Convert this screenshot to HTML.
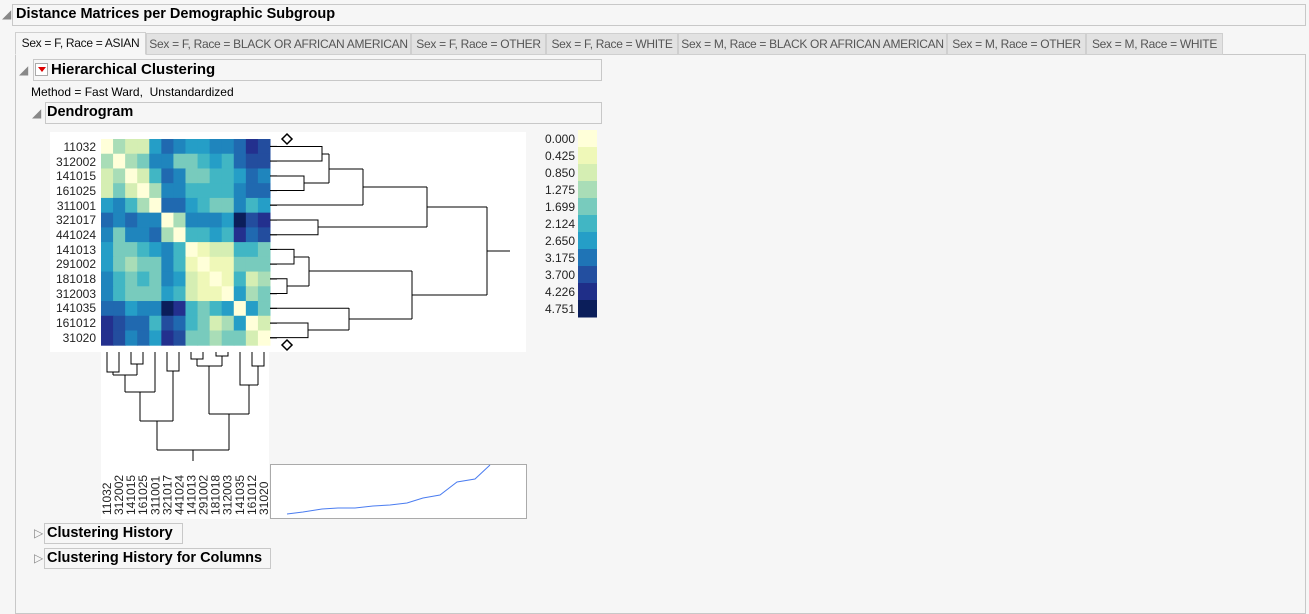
<!DOCTYPE html>
<html><head><meta charset="utf-8"><style>
*{margin:0;padding:0;box-sizing:border-box}
body{width:1309px;height:591px;background:#f6f6f6;position:relative;overflow:hidden;font-family:"Liberation Sans",sans-serif;color:#000}
.a{position:absolute}
.box{position:absolute;border:1px solid #c8c8c8;background:#f6f6f6}
.h{font-weight:bold;font-size:14.5px;position:absolute;white-space:nowrap}
.tab{position:absolute;top:33px;height:22px;border:1px solid #cfcfcf;background:#e2e2e2;font-size:12px;color:#555;padding:3px 0 0 0;text-align:center;white-space:nowrap;letter-spacing:-0.3px}
.tri{position:absolute;font-size:12px;color:#888}
</style></head><body>
<div class="box" style="left:12px;top:4px;width:1294px;height:22px"></div>
<div class="tri" style="left:2px;top:7px">&#9698;</div>
<div class="h" style="left:16px;top:6px">Distance Matrices per Demographic Subgroup</div>

<div class="box" style="left:15px;top:54px;width:1291px;height:560px"></div>
<div class="tab" style="left:15px;width:131px;background:#f6f6f6;color:#111;border-bottom-color:#f6f6f6;top:32px;height:23px">Sex = F, Race = ASIAN</div>
<div class="tab" style="left:146px;width:265px">Sex = F, Race = BLACK OR AFRICAN AMERICAN</div>
<div class="tab" style="left:411px;width:135px">Sex = F, Race = OTHER</div>
<div class="tab" style="left:546px;width:132px">Sex = F, Race = WHITE</div>
<div class="tab" style="left:678px;width:269px">Sex = M, Race = BLACK OR AFRICAN AMERICAN</div>
<div class="tab" style="left:947px;width:139px">Sex = M, Race = OTHER</div>
<div class="tab" style="left:1086px;width:137px">Sex = M, Race = WHITE</div>

<div class="box" style="left:33px;top:59px;width:569px;height:22px"></div>
<div class="tri" style="left:19px;top:63px">&#9698;</div>
<div class="a" style="left:35px;top:63px;width:13px;height:13px;border:1px solid #aaa;background:#fff"><div style="position:absolute;left:2px;top:3px;width:0;height:0;border-left:4px solid transparent;border-right:4px solid transparent;border-top:5px solid #d00"></div></div>
<div class="h" style="left:51px;top:61px;font-size:15px">Hierarchical Clustering</div>
<div class="a" style="left:31px;top:85px;font-size:12px">Method = Fast Ward,&nbsp; Unstandardized</div>

<div class="box" style="left:45px;top:102px;width:557px;height:22px"></div>
<div class="tri" style="left:32px;top:106px">&#9698;</div>
<div class="h" style="left:47px;top:104px">Dendrogram</div>

<svg class="a" style="left:0;top:0" width="1309" height="591" font-family="Liberation Sans, sans-serif">
<rect x="50" y="132" width="476" height="220" fill="#fff"/>
<rect x="101" y="352" width="168" height="167" fill="#fff"/>
<g id="hm"></g>
<g font-size="12" fill="#222" text-anchor="end">
<text x="96" y="151">11032</text><text x="96" y="166">312002</text><text x="96" y="180">141015</text><text x="96" y="195">161025</text><text x="96" y="210">311001</text><text x="96" y="224">321017</text><text x="96" y="239">441024</text><text x="96" y="254">141013</text><text x="96" y="268">291002</text><text x="96" y="283">181018</text><text x="96" y="298">312003</text><text x="96" y="312">141035</text><text x="96" y="327">161012</text><text x="96" y="342">31020</text>
</g>
<g stroke="#000" stroke-width="1" fill="none">
<path d="M270 146.5H322V161H270M322 154H329M270 176H304V190.5H270M304 183H329M329 154V183M329 169H363M270 205H363M363 169V205M363 187H427M270 220H318V234.7H270M318 227H427M427 187V227M427 207H487"/>
<path d="M270 249.4H294V264H270M294 257H309M270 278.8H287V293.5H270M287 286H309M309 257V286M309 271H412M270 308.2H349M270 323H308V337.6H270M308 330H349M349 308V330M349 319H412M412 271V319M412 295H487M487 207V295M487 251H510"/>
<path d="M107 352V372H119V352M113 372V375M131 352V364H143V352M137 364V375M113 375H137M125 375V392M155 352V392M125 392H155M140 392V421M167 352V371H179V352M173 371V421M140 421H173M157 421V450"/>
<path d="M191 352V359H203V352M197 359V366M216 352V356H228V352M222 356V366M197 366H222M209 366V414M252 352V366H264V352M258 366V385M240 352V385H258M249 385V414M209 414H249M229 414V450M157 450H229M193 450V461"/>
</g>
<path d="M287 134L292 139L287 144L282 139Z M287 340L292 345L287 350L282 345Z" fill="#fff" stroke="#000" stroke-width="1.5"/>
<g font-size="12" fill="#222" id="bl"></g>
<g id="leg"></g>
<g font-size="12" fill="#222" text-anchor="end">
<text x="575" y="143">0.000</text><text x="575" y="160">0.425</text><text x="575" y="177">0.850</text><text x="575" y="194">1.275</text><text x="575" y="211">1.699</text><text x="575" y="228">2.124</text><text x="575" y="245">2.650</text><text x="575" y="262">3.175</text><text x="575" y="279">3.700</text><text x="575" y="296">4.226</text><text x="575" y="313">4.751</text>
</g>
<rect x="270.5" y="464.5" width="256" height="54" fill="#fff" stroke="#aaa"/>
<polyline fill="none" stroke="#4a7cf0" stroke-width="1" points="287,514 303,512 322,509 338,508 355,508 373,506 390,505 407,503 423,498 440,495 457,482 475,479 490,465"/>
</svg>

<div class="box" style="left:44px;top:523px;width:139px;height:21px"></div>
<div class="tri" style="left:34px;top:526px">&#9655;</div>
<div class="h" style="left:47px;top:525px">Clustering History</div>
<div class="box" style="left:44px;top:548px;width:227px;height:21px"></div>
<div class="tri" style="left:34px;top:551px">&#9655;</div>
<div class="h" style="left:47px;top:550px">Clustering History for Columns</div>

<script>
var P=["#ffffd9","#eff8b8","#d5eeb3","#a9ddb7","#78cbbd","#41b6c4","#259ec7","#1f85bd","#2069b0","#234d9e","#23308e","#0b1e5a"];
var M=[[0,3,2,2,6,8,7,6,6,7,7,8,10,9],[3,0,3,4,7,7,4,4,5,6,5,8,9,9],[2,3,0,2,5,8,7,4,4,5,5,6,8,7],[2,4,2,0,3,7,7,5,5,5,5,7,8,8],[6,7,5,3,0,8,8,6,5,4,4,7,5,6],[8,7,8,7,7,0,3,7,7,7,6,11,9,10],[7,4,7,7,8,3,0,5,5,6,5,10,8,9],[6,4,4,5,6,7,5,0,1,2,2,5,5,4],[6,4,3,4,4,7,5,1,0,1,1,4,4,4],[7,5,4,5,4,7,6,2,1,0,1,5,2,3],[7,5,4,4,4,6,5,2,1,1,0,6,3,4],[8,8,6,7,7,11,10,5,4,5,6,0,6,4],[10,9,8,8,5,9,8,5,4,2,3,6,0,2],[10,9,7,8,6,10,9,4,4,3,4,4,2,0]];
var s="";for(var i=0;i<14;i++)for(var j=0;j<14;j++){s+='<rect x="'+(101+j*12.07).toFixed(2)+'" y="'+(139+i*14.73).toFixed(2)+'" width="12.6" height="15.2" fill="'+P[M[i][j]]+'"/>';}
for(i=0;i<14;i++)s+='<path d="M270 '+(146.4+i*14.73).toFixed(1)+'H277" stroke="#000"/>';
document.getElementById("hm").innerHTML=s;
var L=["11032","312002","141015","161025","311001","321017","441024","141013","291002","181018","312003","141035","161012","31020"];
s="";for(i=0;i<14;i++){var x=(107+i*12.07+4).toFixed(1);s+='<text transform="translate('+x+',515) rotate(-90)">'+L[i]+'</text>';}
document.getElementById("bl").innerHTML=s;
var C=["#ffffd9","#eff8b8","#d5eeb3","#a9ddb7","#78cbbd","#41b6c4","#259ec7","#1f74b6","#234fa0","#1f2e88","#0b1e5a"];
s="";for(i=0;i<11;i++)s+='<rect x="578" y="'+(130+i*17)+'" width="19" height="17.5" fill="'+C[i]+'"/>';
document.getElementById("leg").innerHTML=s;
</script>
</body></html>
